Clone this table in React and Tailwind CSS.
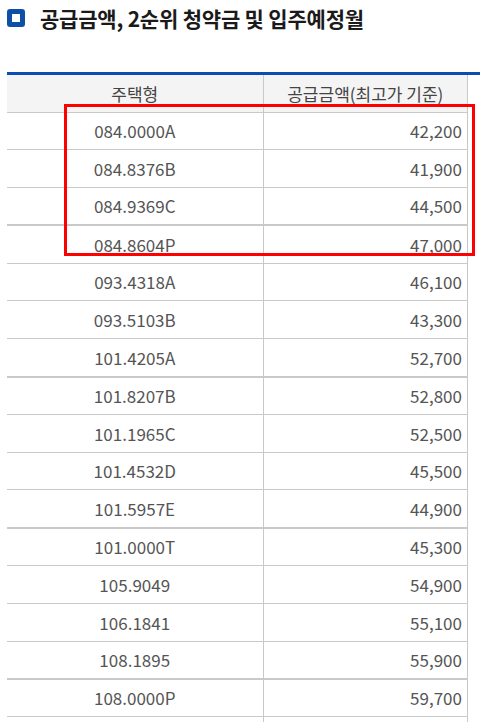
import React from 'react';

const rows = [
  { type: '084.0000A', price: '42,200' },
  { type: '084.8376B', price: '41,900' },
  { type: '084.9369C', price: '44,500', thick: true },
  { type: '084.8604P', price: '47,000' },
  { type: '093.4318A', price: '46,100' },
  { type: '093.5103B', price: '43,300' },
  { type: '101.4205A', price: '52,700', thick: true },
  { type: '101.8207B', price: '52,800' },
  { type: '101.1965C', price: '52,500' },
  { type: '101.4532D', price: '45,500' },
  { type: '101.5957E', price: '44,900', thick: true },
  { type: '101.0000T', price: '45,300' },
  { type: '105.9049', price: '54,900' },
  { type: '106.1841', price: '55,100' },
  { type: '108.1895', price: '55,900', thick: true },
  { type: '108.0000P', price: '59,700' },
  { type: '', price: '' },
];

const App = () => {
  return (
    <div
      className="relative bg-white w-[480px] h-[722px] overflow-hidden"
      style={{ fontFamily: '"Noto Sans CJK KR", "Noto Sans", sans-serif' }}
    >
      {/* Section title */}
      <div className="flex items-center h-[36px] pl-[7px]">
        <span className="flex items-center justify-center w-[18px] h-[18px] rounded-[3px] bg-[#0e4fa8]">
          <span className="w-[8px] h-[8px] bg-white" />
        </span>
        <h2 className="ml-[15px] text-[21px] font-bold text-[#1a1a1a] tracking-[-0.2px] leading-none">
          공급금액, 2순위 청약금 및 입주예정월
        </h2>
      </div>

      {/* Table */}
      <div className="mt-[36px] ml-[7px] border-t-[3px] border-[#0b4db0]">
        <table className="w-[461px] border-collapse text-[17px] text-[#555]">
          <thead>
            <tr className="h-[37px] bg-[#f4f4f4] text-[#444]">
              <th className="w-[256px] font-normal border-b border-r border-[#c9c9c9]">주택형</th>
              <th className="font-normal border-b border-r border-[#c9c9c9]">공급금액(최고가 기준)</th>
            </tr>
          </thead>
          <tbody>
            {rows.map((r, i) => (
              <tr key={i} className="h-[37.8px]">
                <td
                  className={`text-center border-r border-[#c9c9c9] ${
                    r.thick ? 'border-b-2' : 'border-b'
                  }`}
                >
                  {r.type}
                </td>
                <td
                  className={`text-right pr-[5px] border-r border-[#c9c9c9] ${
                    r.thick ? 'border-b-2' : 'border-b'
                  }`}
                >
                  {r.price}
                </td>
              </tr>
            ))}
          </tbody>
        </table>
      </div>

      {/* Highlight box */}
      <div className="absolute left-[64px] top-[104px] w-[411px] h-[152px] border-[3px] border-[#ff0000]" />
    </div>
  );
};

export default App;
